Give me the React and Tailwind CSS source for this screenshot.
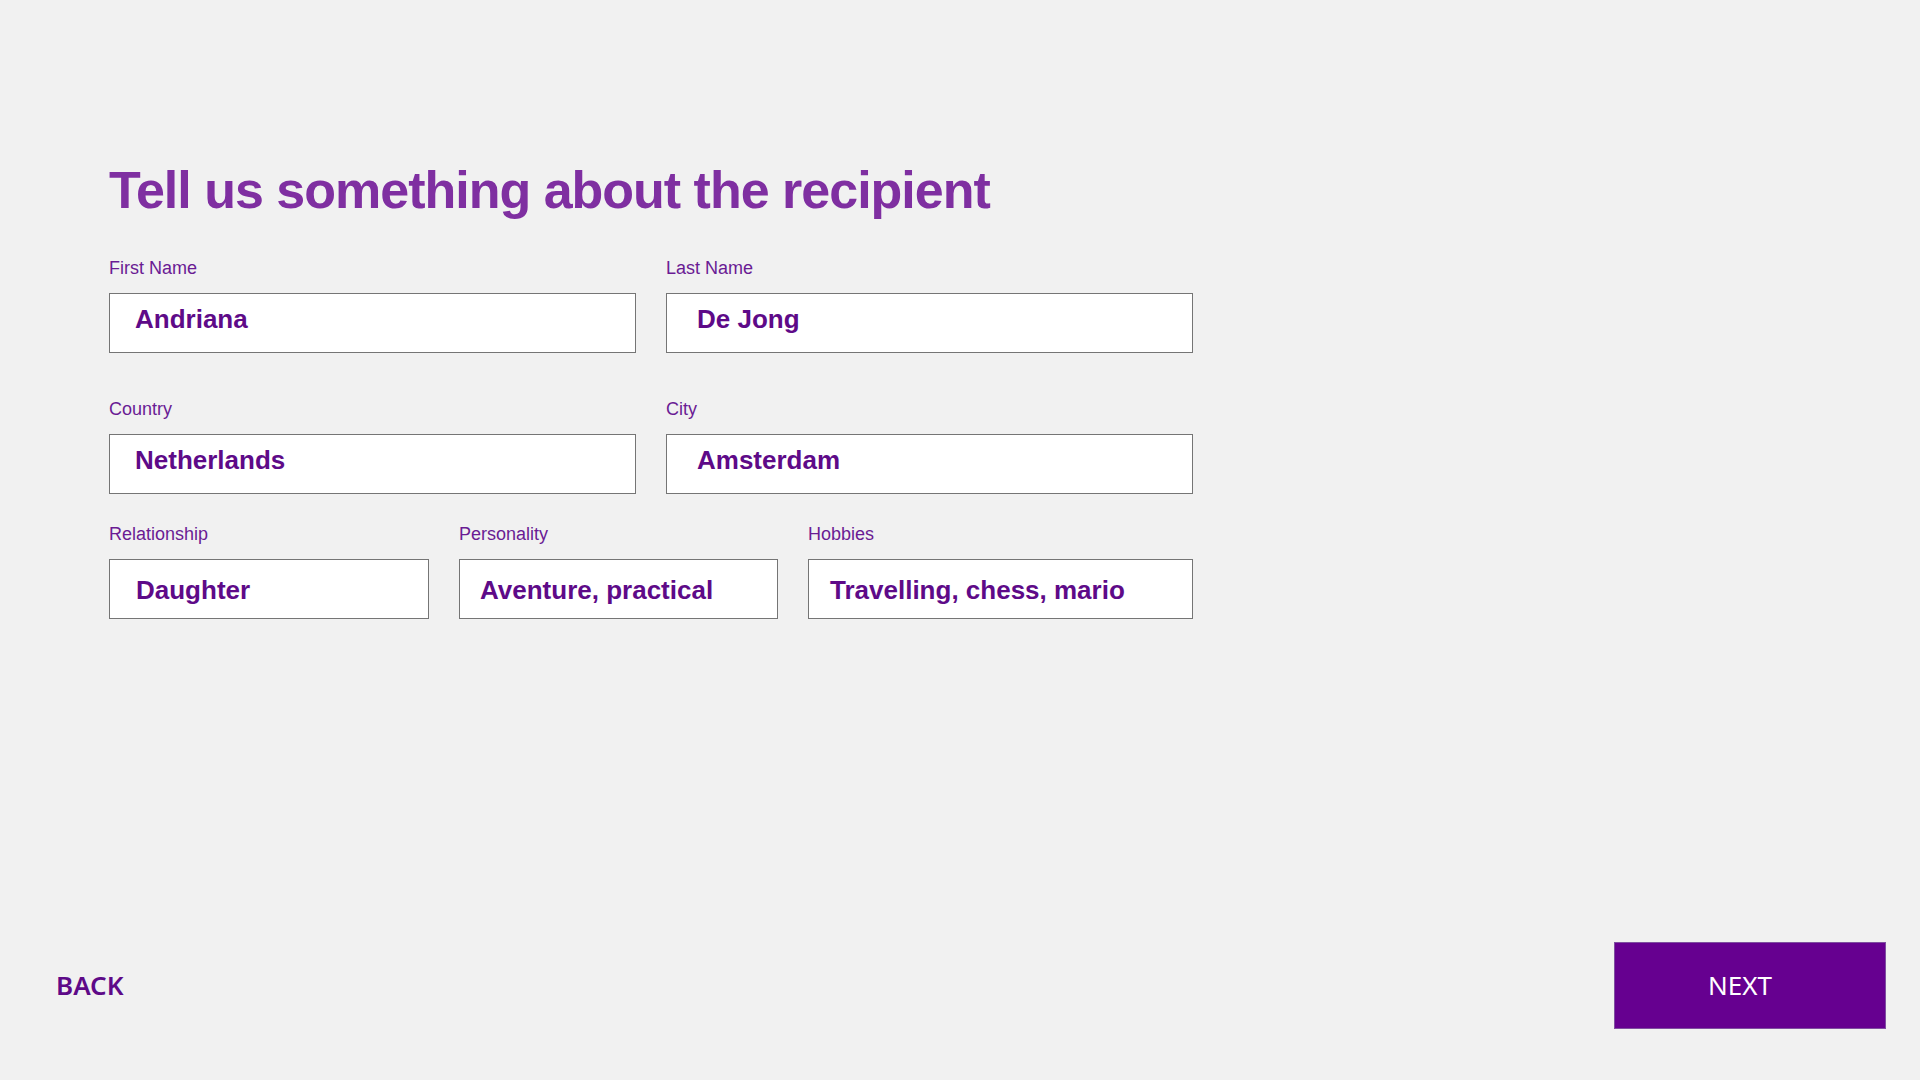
const fields = [
  [
    { label: "First Name", value: "Andriana", w: "w-[527px]", pad: "pl-[25px] pt-[12px]" },
    { label: "Last Name", value: "De Jong", w: "w-[527px]", pad: "pl-[30px] pt-[12px]" },
  ],
  [
    { label: "Country", value: "Netherlands", w: "w-[527px]", pad: "pl-[25px] pt-[12px]" },
    { label: "City", value: "Amsterdam", w: "w-[527px]", pad: "pl-[30px] pt-[12px]" },
  ],
  [
    { label: "Relationship", value: "Daughter", w: "w-[320px]", pad: "pl-[26px] pt-[17px]" },
    { label: "Personality", value: "Aventure, practical", w: "w-[319px]", pad: "pl-[20px] pt-[17px]" },
    { label: "Hobbies", value: "Travelling, chess, mario", w: "w-[385px]", pad: "pl-[21px] pt-[17px]" },
  ],
];

const Field = ({ label, value, w, pad }) => (
  <div className={w}>
    <label className="block text-[18px] leading-[18px] mb-[16px] text-[#6a1b94]">
      {label}
    </label>
    <div
      className={`h-[60px] bg-white border border-[#757575] text-[26px] leading-[26px] font-bold text-[#5e0a88] ${pad}`}
    >
      {value}
    </div>
  </div>
);

export default function App() {
  return (
    <div className="min-h-screen bg-[#f1f1f1] flex flex-col font-['Liberation_Sans',sans-serif]">
      <main className="pl-[109px] pt-[164px]">
        <h1 className="text-[52px] leading-[52px] font-bold tracking-[-1px] text-[#7f2fa1] mb-[43px]">
          Tell us something about the recipient
        </h1>

        <div className="flex gap-[30px]">
          {fields[0].map((f) => (
            <Field key={f.label} {...f} />
          ))}
        </div>
        <div className="flex gap-[30px] mt-[47px]">
          {fields[1].map((f) => (
            <Field key={f.label} {...f} />
          ))}
        </div>
        <div className="flex gap-[30px] mt-[31px]">
          {fields[2].map((f) => (
            <Field key={f.label} {...f} />
          ))}
        </div>
      </main>

      <footer className="mt-auto flex items-center justify-between pl-[56px] pr-[34px] pb-[51px] font-['Noto_Sans',sans-serif]">
        <button className="text-[26px] font-semibold text-[#5e0a88]">BACK</button>
        <button className="w-[272px] h-[87px] pr-[20px] bg-[#660090] border border-[#7f4fa0] text-white text-[26px]">
          NEXT
        </button>
      </footer>
    </div>
  );
}
